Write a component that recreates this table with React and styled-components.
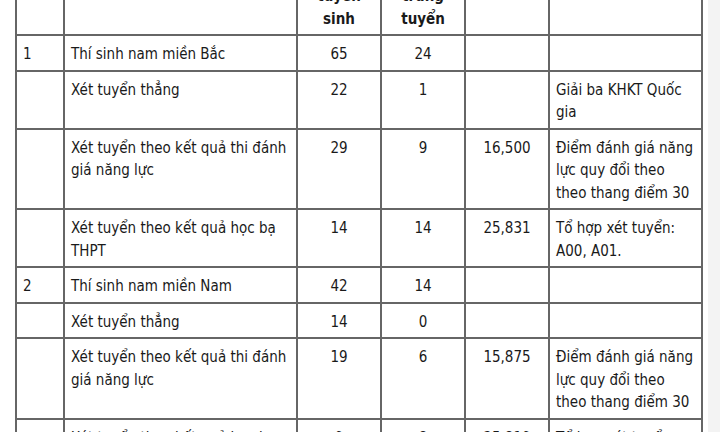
import React from "react";
import styled, { createGlobalStyle } from "styled-components";

const Global = createGlobalStyle`
  html, body { margin: 0; padding: 0; background: #ffffff; }
  body { width: 720px; height: 432px; overflow: hidden; }
  #root { height: 432px; }
`;

const Page = styled.div`
  display: flex;
  align-items: flex-start;
  height: 432px;
  padding-left: 15px;
  box-sizing: border-box;
  overflow: hidden;
`;

const Strip = styled.div`
  flex: 1;
  align-self: stretch;
  margin-left: 5px;
  background: #f3f3f3;
`;

const Table = styled.table`
  border-collapse: collapse;
  table-layout: fixed;
  width: 686px;
  margin-top: -69px;
  font-family: "DejaVu Sans Condensed", "DejaVu Sans", Verdana, sans-serif;
  font-stretch: condensed;
  font-size: 15px;
  line-height: 22.5px;
  color: #1a1a1a;
`;

const HeadCell = styled.th`
  border: 2px solid #666666;
  padding: 7px 6px 4px;
  font-weight: bold;
  text-align: center;
  vertical-align: middle;
  white-space: nowrap;
`;

const Cell = styled.td`
  border: 2px solid #666666;
  padding: 7px 6px 4px;
  vertical-align: top;
  text-align: ${(p) => (p.$center ? "center" : "left")};
  white-space: nowrap;
  overflow: hidden;
`;

const cols = [48, 233, 84, 84, 84, 153];

const Lines = ({ text }) =>
  text.split("\n").map((l, i, a) => (
    <React.Fragment key={i}>
      {l}
      {i < a.length - 1 && <br />}
    </React.Fragment>
  ));

const rows = [
  ["1", "Thí sinh nam miền Bắc", "65", "24", "", ""],
  ["", "Xét tuyển thẳng", "22", "1", "", "Giải ba KHKT Quốc\ngia"],
  [
    "",
    "Xét tuyển theo kết quả thi đánh\ngiá năng lực",
    "29",
    "9",
    "16,500",
    "Điểm đánh giá năng\nlực quy đổi theo\ntheo thang điểm 30",
  ],
  ["", "Xét tuyển theo kết quả học bạ\nTHPT", "14", "14", "25,831", "Tổ hợp xét tuyển:\nA00, A01."],
  ["2", "Thí sinh nam miền Nam", "42", "14", "", ""],
  ["", "Xét tuyển thẳng", "14", "0", "", ""],
  [
    "",
    "Xét tuyển theo kết quả thi đánh\ngiá năng lực",
    "19",
    "6",
    "15,875",
    "Điểm đánh giá năng\nlực quy đổi theo\ntheo thang điểm 30",
  ],
  ["", "Xét tuyển theo kết quả học bạ\nTHPT", "9", "8", "25,819", "Tổ hợp xét tuyển:\nA00, A01."],
];

const heads = ["TT", "Đối tượng, phương thức", "Chỉ\ntiêu\ntuyển\nsinh", "Số\nthí sinh\ntrúng\ntuyển", "Điểm chuẩn", "Ghi chú"];

export default function App() {
  return (
    <>
      <Global />
      <Page>
        <Table>
          <colgroup>
            {cols.map((w, i) => (
              <col key={i} style={{ width: w }} />
            ))}
          </colgroup>
          <thead>
            <tr>
              {heads.map((h, i) => (
                <HeadCell key={i}>
                  <Lines text={h} />
                </HeadCell>
              ))}
            </tr>
          </thead>
          <tbody>
            {rows.map((r, ri) => (
              <tr key={ri}>
                {r.map((c, ci) => (
                  <Cell key={ci} $center={ci >= 2 && ci <= 4}>
                    <Lines text={c} />
                  </Cell>
                ))}
              </tr>
            ))}
          </tbody>
        </Table>
        <Strip />
      </Page>
    </>
  );
}
